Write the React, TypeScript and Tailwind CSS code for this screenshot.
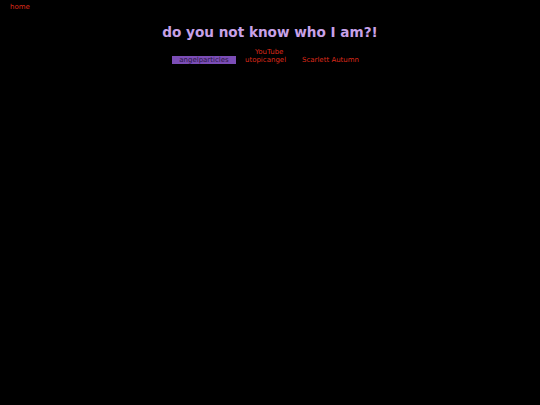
export default function App() {
  return (
    <div className="min-h-[405px] w-full bg-black font-['DejaVu_Sans',Verdana,sans-serif]">
      <div className="px-[10px] pt-[3px] text-[7px] leading-[9px]">
        <a className="text-[#df2a1a]">home</a>
      </div>
      <h1 className="mt-[12px] text-center text-[13.6px] font-bold leading-[16px] text-[#c8a2e8]">
        do you not know who I am?!
      </h1>
      <div className="mt-[8px] flex items-end justify-center pr-[9px] text-[7px] leading-[8px]">
        <span className="w-[64px] shrink-0 bg-[#7b4db6] text-center text-[#2a1844]">angelparticles</span>
        <span className="ml-[9px] flex w-[37px] shrink-0 flex-col items-start whitespace-nowrap text-[#df2a1a]">
          <span className="pl-[10px]">YouTube</span>
          <span>utopicangel</span>
        </span>
        <span className="ml-[20px] whitespace-nowrap text-[#df2a1a]">Scarlett Autumn</span>
      </div>
    </div>
  );
}
